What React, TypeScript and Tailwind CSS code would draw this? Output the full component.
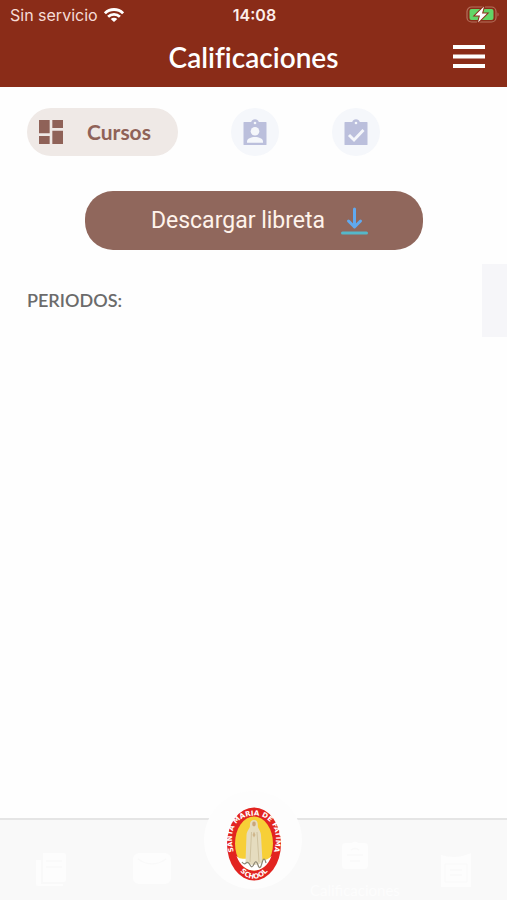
import { MdDashboard } from 'react-icons/md'

function StatusBar() {
  return (
    <div className="grid h-[30px] grid-cols-3 items-center pr-2 pl-[10px] font-['Inter',sans-serif] text-[16px] leading-5">
      <div className="flex items-center gap-[6px] whitespace-nowrap text-[#f6dcd6]">
        <span>Sin servicio</span>
        <svg viewBox="0 0 20 14" className="h-[14px] w-5" fill="none" stroke="#ffffff">
          <path d="M.9 5.300C6 .3 14 .3 19.100 5.300" strokeWidth="2.900" />
          <path d="M4.100 8.800C7.500 5.600 12.500 5.600 15.900 8.800" strokeWidth="2.800" />
          <path d="M10 14 6.700 11C8.600 9.300 11.400 9.300 13.300 11Z" fill="#ffffff" stroke="none" />
        </svg>
      </div>
      <span className="justify-self-center font-semibold text-[#fdeeea]">14:08</span>
      <svg viewBox="0 0 34 18" className="h-[18px] w-[34px] justify-self-end" aria-label="Batería cargando">
        <rect x="2" y="1" width="29" height="15" rx="4.500" fill="none" stroke="#b5705c" strokeWidth="1.200" />
        <path d="M32.500 6.500v4c1.400-.4 1.400-3.600 0-4Z" fill="#b5705c" />
        <rect x="4.500" y="3" width="24" height="11" rx="2" fill="#62d667" />
        <path d="M19 .5 10 9.500h5L13 16.500l9-9h-5Z" fill="#ffffff" stroke="#8a2c18" strokeWidth="2" paintOrder="stroke" />
      </svg>
    </div>
  )
}

function Header() {
  return (
    <header className="bg-[#8a2c18] text-white">
      <StatusBar />
      <div className="grid h-[57px] grid-cols-[48px_1fr_48px] items-center px-[14px]">
        <h1 className="col-start-2 pb-1 text-center text-[28px] leading-8 font-semibold [font-variant-ligatures:none]">Calificaciones</h1>
        <button type="button" aria-label="Menú" className="flex size-12 items-center justify-center pb-1">
          <svg viewBox="0 0 32 23" className="h-[23px] w-8" fill="#ffffff">
            <rect width="32" height="4" />
            <rect y="9.500" width="32" height="4" />
            <rect y="19" width="32" height="4" />
          </svg>
        </button>
      </div>
    </header>
  )
}

function PersonClipboard() {
  return (
    <svg viewBox="0 0 24 26" className="h-[26px] w-6">
      <path d="M1 3h7.200a4 4 0 0 1 7.600 0H23q.5 0 .5.500v22q0 .5-.5.500H1q-.5 0-.5-.500v-22Q.5 3 1 3Z" fill="#bbbfdc" />
      <circle cx="12" cy="4" r="1.300" fill="#f5f7fb" />
      <circle cx="12" cy="12.200" r="4.300" fill="#f5f7fb" />
      <path d="M4 23.800v-1.300c0-2.800 4-4.500 8-4.500s8 1.700 8 4.500v1.300Z" fill="#f5f7fb" />
    </svg>
  )
}

function CheckClipboard() {
  return (
    <svg viewBox="0 0 24 26" className="h-[26px] w-6">
      <path d="M1 3h7.200a4 4 0 0 1 7.600 0H23q.5 0 .5.500v22q0 .5-.5.500H1q-.5 0-.5-.500v-22Q.5 3 1 3Z" fill="#bbbfdc" />
      <circle cx="12" cy="4" r="1.300" fill="#f5f7fb" />
      <path d="m5 16 5 5 9.500-10" fill="none" stroke="#f5f7fb" strokeWidth="2.900" />
    </svg>
  )
}

function Tabs() {
  return (
    <nav className="flex gap-[53px] px-[27px] pt-[21px] pb-[26px]">
      <button type="button" className="flex h-12 w-[151px] items-center gap-5 rounded-full bg-[#efe9e6] pl-2 text-[21px] leading-6 font-bold text-[#8f6258]">
        <MdDashboard className="size-8" />
        Cursos
      </button>
      <button type="button" aria-label="Alumno" className="flex size-12 items-center justify-center rounded-full bg-[#f5f7fb]">
        <PersonClipboard />
      </button>
      <button type="button" aria-label="Evaluaciones" className="flex size-12 items-center justify-center rounded-full bg-[#f5f7fb]">
        <CheckClipboard />
      </button>
    </nav>
  )
}

function SchoolSeal() {
  return (
    <svg viewBox="0 0 54 74" className="h-[74px] w-[54px]">
      <defs>
        <path id="seal-top" d="M9 51C-1 25 9 8.500 27 8.500S55 25 45 51" />
        <path id="seal-bottom" d="M7 54C17 77.500 37 77.500 47 54" />
      </defs>
      <ellipse cx="27" cy="37" rx="27" ry="36.500" fill="#e22420" />
      <ellipse cx="27" cy="36.500" rx="19" ry="27" fill="#f7cf37" />
      <path d="M9.500 49C14 54 19 50 27 52S40 54 44.500 49C41 59 34 63.500 27 63.500S13 59 9.500 49Z" fill="#ffffff" />
      <path d="M27 13c-3 0-4.500 2.500-4 6-.2 3-3 4-3.500 9L18.500 55c4 4 13 4 17 0L34 28c-.5-5-3-6-3.200-9 .3-3.500-.8-6-3.800-6Z" fill="#e5dcbf" />
      <path d="M24.500 25 23 55M30 25l2 30" stroke="#d0c3a0" strokeWidth="1" fill="none" />
      <ellipse cx="27" cy="17" rx="1.800" ry="2.400" fill="#c9a57d" />
      <path d="m25.500 28 1.500-3.500 1.500 3.500-1.500 2.500Z" fill="#cfb58a" />
      <path d="M15 55q2 3 4 1t4 2 4-1 4 1 4-2 4 0" stroke="#8b8574" strokeWidth="1.200" fill="none" />
      <text fill="#ffffff" fontSize="7" fontWeight="700" textAnchor="middle" fontFamily="DejaVu Sans, sans-serif">
        <textPath href="#seal-top" startOffset="50%">SANTA MARIA DE FATIMA</textPath>
      </text>
      <text fill="#ffffff" fontSize="7" fontWeight="700" textAnchor="middle" fontFamily="DejaVu Sans, sans-serif">
        <textPath href="#seal-bottom" startOffset="50%">SCHOOL</textPath>
      </text>
    </svg>
  )
}

function BottomNav() {
  return (
    <nav className="grid h-[82px] grid-cols-5 justify-items-center border-t-2 border-[#e5e5e5] bg-[#f9f9f9] text-[#fdfdfd]">
      <a href="#cursos" aria-label="Cursos" className="pt-8">
        <svg viewBox="0 0 36 34" className="h-[34px] w-9" fill="currentColor">
          <path d="M10 1h21a2 2 0 0 1 2 2v25a2 2 0 0 1-2 2H10Z" />
          <path d="M3 8h5v24h22v2H5a2 2 0 0 1-2-2Z" />
          <path d="M13 9h16M13 15h16" stroke="#f9f9f9" strokeWidth="1.500" />
        </svg>
      </a>
      <a href="#mensajes" aria-label="Mensajes" className="pt-8">
        <svg viewBox="0 0 40 32" className="h-8 w-10" fill="currentColor">
          <rect x="1" y="1" width="38" height="31" rx="6" />
          <path d="M6 7q14 10 28 0" fill="none" stroke="#f9f9f9" strokeWidth="1.500" />
        </svg>
      </a>
      <a href="#inicio" aria-label="Inicio" className="-mt-[29px] flex size-[98px] items-center justify-center rounded-full bg-[#fdfdfd] pt-2 pl-[2px]">
        <SchoolSeal />
      </a>
      <a href="#calificaciones" className="flex flex-col items-center gap-3 pt-5">
        <svg viewBox="0 0 30 30" className="size-[30px]" fill="currentColor">
          <path d="M6 3h6q3-3 6 0h6q4 0 4 4v18q0 4-4 4H6q-4 0-4-4V7q0-4 4-4Z" />
          <path d="M11 10q4-3 8 0M7 15h16M10 21h10" fill="none" stroke="#f9f9f9" strokeWidth="1.500" />
        </svg>
        <span className="text-[15px] leading-4">Calificaciones</span>
      </a>
      <a href="#agenda" aria-label="Agenda" className="pt-8">
        <svg viewBox="0 0 32 36" className="h-9 w-8" fill="currentColor">
          <path d="M1 3q15 5 30-2v34H1Z" />
          <path d="M5 12h22v18H5Z" fill="none" stroke="#f9f9f9" />
          <path d="M10 18h12M10 23h12" stroke="#f9f9f9" strokeWidth="1.500" />
        </svg>
      </a>
    </nav>
  )
}

export default function App() {
  return (
    <div className="flex min-h-screen flex-col bg-[#fefefe] font-['Lato',sans-serif]">
      <Header />
      <Tabs />
      <main className="flex flex-1 flex-col pt-[9px]">
        <button type="button" className="flex h-[59px] w-2/3 items-center justify-center gap-4 self-center rounded-[28px] bg-[#90675c] pl-3 font-['Roboto',sans-serif] text-[23px] leading-7 text-[#fff3eb]">
          Descargar libreta
          <svg viewBox="0 0 27 28" className="h-7 w-[27px]" fill="none" strokeWidth="3" strokeLinecap="round">
            <path d="M13.500 2v17M7.500 14l6 6 6-6" stroke="#60a9ef" strokeLinejoin="round" />
            <path d="M1.500 26h24" stroke="#55b8c9" />
          </svg>
        </button>
        <section className="mt-[14px] flex h-[73px] items-center justify-between pl-[27px]">
          <h2 className="pb-[2px] text-[18px] leading-6 font-semibold text-[#6b6b6b]">PERIODOS:</h2>
          <div className="h-full w-[25px] bg-[#f6f6f9]" />
        </section>
      </main>
      <BottomNav />
    </div>
  )
}
